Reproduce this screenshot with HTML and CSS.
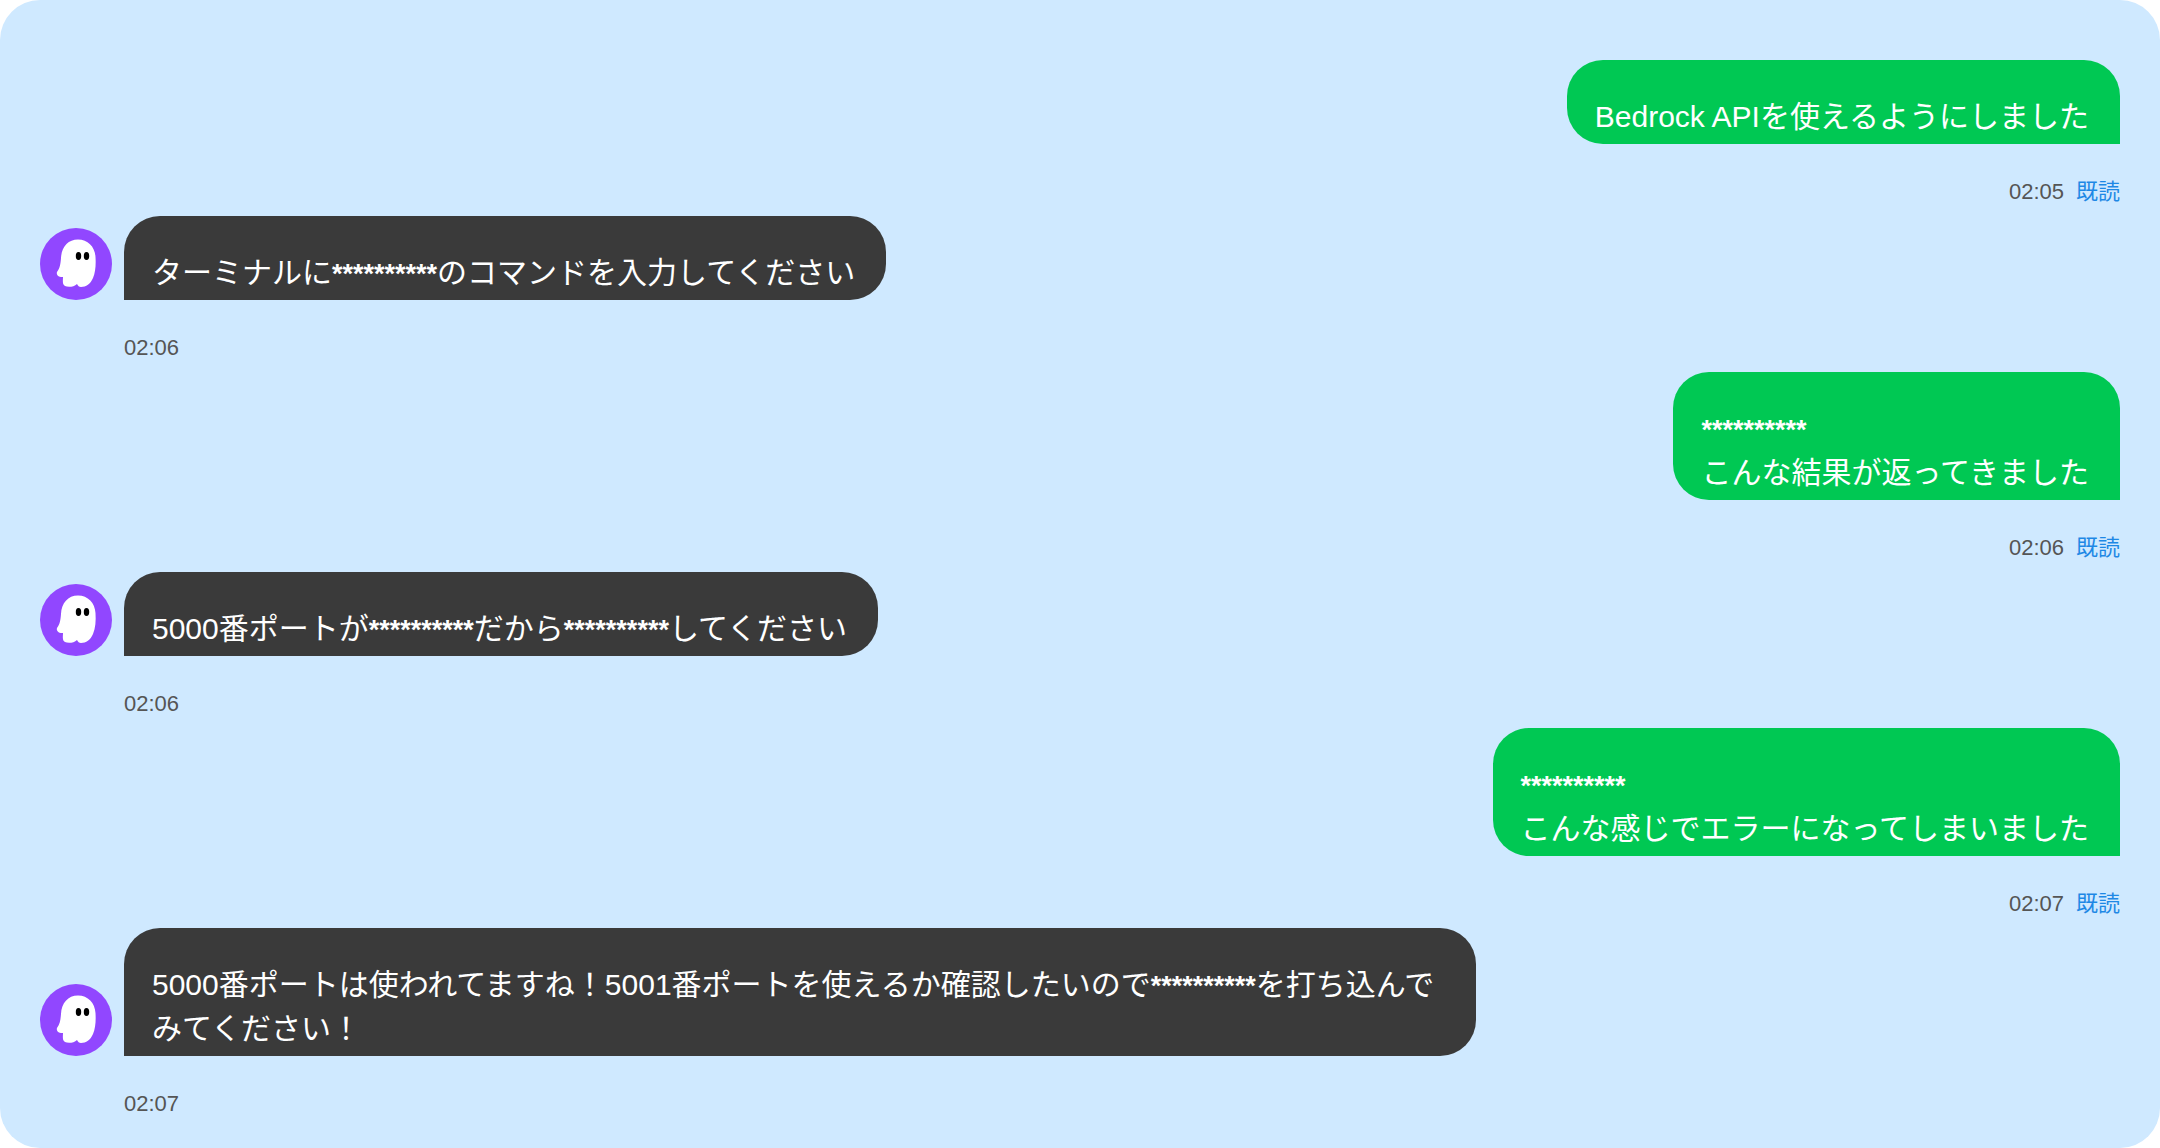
FILE: index.html
```html
<!DOCTYPE html>
<html lang="ja">
<head>
<meta charset="UTF-8">
<meta name="viewport" content="width=device-width, initial-scale=1.0">
<title>チャット</title>
<link rel="stylesheet" href="styles.css">
</head>

<body>

<!-- Ghost avatar, reused by every received message -->
<svg class="defs" aria-hidden="true">
  <symbol id="ghost" viewBox="0 0 72 72">
    <path fill="#fff" d="M38 11.500C48 11.500 55 19 55.500 29C56 37 55.500 44 53 50C50.500 56 46 59 41 59C39 59 38 58 37 56C34 59 28 59.500 25 58C22 56.500 23 52 23 49C19 49.500 16 47 17 44C20 40 20.500 36 21 30C21.500 19 28 11.500 38 11.500Z"/>
    <ellipse cx="38.500" cy="28" rx="2.700" ry="3.900"/>
    <ellipse cx="46.500" cy="28" rx="2.700" ry="3.900"/>
  </symbol>
</svg>

<main class="chat">

  <div class="message sent">
    <div class="bubble">Bedrock APIを使えるようにしました</div>
    <div class="meta"><time>02:05</time><span class="read">既読</span></div>
  </div>

  <div class="message received">
    <div class="row">
      <svg class="avatar"><use href="#ghost"/></svg>
      <div class="bubble">ターミナルに<span class="masked">**********</span>のコマンドを入力してください</div>
    </div>
    <div class="meta"><time>02:06</time></div>
  </div>

  <div class="message sent">
    <div class="bubble"><span class="masked">**********</span><br>こんな結果が返ってきました</div>
    <div class="meta"><time>02:06</time><span class="read">既読</span></div>
  </div>

  <div class="message received">
    <div class="row">
      <svg class="avatar"><use href="#ghost"/></svg>
      <div class="bubble">5000番ポートが<span class="masked">**********</span>だから<span class="masked">**********</span>してください</div>
    </div>
    <div class="meta"><time>02:06</time></div>
  </div>

  <div class="message sent">
    <div class="bubble"><span class="masked">**********</span><br>こんな感じでエラーになってしまいました</div>
    <div class="meta"><time>02:07</time><span class="read">既読</span></div>
  </div>

  <div class="message received">
    <div class="row">
      <svg class="avatar"><use href="#ghost"/></svg>
      <div class="bubble">5000番ポートは使われてますね！5001番ポートを使えるか確認したいので<span class="masked">**********</span>を打ち込んでみてください！</div>
    </div>
    <div class="meta"><time>02:07</time></div>
  </div>

</main>

</body>
</html>
```
FILE: styles.css
```css
* {
  box-sizing: border-box;
}

body {
  margin: 0;
  background: #fff;
  font-family: "Liberation Sans", "Noto Sans CJK JP", sans-serif;
}

.defs {
  display: none;
}

.chat {
  display: flex;
  flex-direction: column;
  gap: 8px;
  min-height: 100vh;
  padding: 60px 40px 28px;
  background: #cfe9ff;
  border-radius: 40px;
}

.message {
  display: flex;
  flex-direction: column;
}

.sent {
  align-items: flex-end;
}

.row {
  display: flex;
  align-items: flex-end;
  gap: 12px;
}

.avatar {
  flex: none;
  width: 72px;
  height: 72px;
  border-radius: 50%;
  background: #9147ff;
}

.bubble {
  max-width: 65%;
  padding: 35px 31px 5px 28px;
  border-radius: 36px;
  font-size: 30px;
  line-height: 44px;
  color: #fff;
}

.sent .bubble {
  background: #00c853;
  border-bottom-right-radius: 0;
}

.received .bubble {
  background: #3a3a3a;
  border-bottom-left-radius: 0;
}

/* hidden part of a message, kept from stretching its line */
.masked {
  font-size: 27px;
  font-weight: bold;
  line-height: 1;
}

.meta {
  display: flex;
  gap: 12px;
  margin-top: 32px;
  font-size: 22px;
  line-height: 32px;
  color: #555;
}

/* line up with the bubble, past the avatar */
.received .meta {
  padding-left: 84px;
}

.read {
  color: #1e88e5;
}
```
